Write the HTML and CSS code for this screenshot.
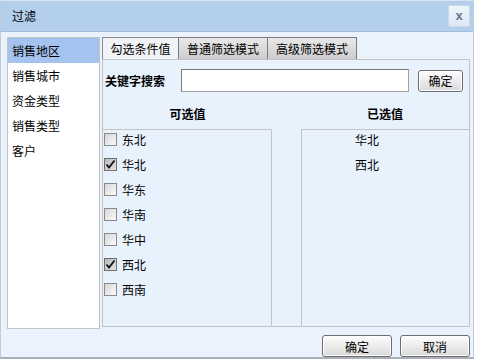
FILE: index.html
```html
<!DOCTYPE html>
<html lang="zh">
<head>
<meta charset="utf-8">
<title>过滤</title>
<link rel="stylesheet" href="styles.css">
</head>
<body>
<div class="dialog">
  <div class="titlebar">
    <span class="title">过滤</span>
    <span class="close">x</span>
  </div>
  <div class="main">
    <ul class="sidebar">
      <li class="side-item active">销售地区</li>
      <li class="side-item">销售城市</li>
      <li class="side-item">资金类型</li>
      <li class="side-item">销售类型</li>
      <li class="side-item">客户</li>
    </ul>
    <div class="tabarea">
      <div class="tabs">
        <span class="tab tab-active">勾选条件值</span>
        <span class="tab">普通筛选模式</span>
        <span class="tab">高级筛选模式</span>
      </div>
      <div class="panel">
        <div class="search">
          <span class="search-label">关键字搜索</span>
          <span class="input"></span>
          <span class="btn btn-small">确定</span>
        </div>
        <div class="columns">
          <div class="col col-left">
            <div class="col-head">可选值</div>
            <div class="box box-left">
              <div class="row"><span class="cb"></span><span>东北</span></div>
              <div class="row"><span class="cb checked"><svg viewBox="0 0 13 13" width="13" height="13"><path d="M2.5 6.5 L5 9.5 L10.5 2.5" fill="none" stroke="#111" stroke-width="1.8"/></svg></span><span>华北</span></div>
              <div class="row"><span class="cb"></span><span>华东</span></div>
              <div class="row"><span class="cb"></span><span>华南</span></div>
              <div class="row"><span class="cb"></span><span>华中</span></div>
              <div class="row"><span class="cb checked"><svg viewBox="0 0 13 13" width="13" height="13"><path d="M2.5 6.5 L5 9.5 L10.5 2.5" fill="none" stroke="#111" stroke-width="1.8"/></svg></span><span>西北</span></div>
              <div class="row"><span class="cb"></span><span>西南</span></div>
            </div>
          </div>
          <div class="col col-right">
            <div class="col-head">已选值</div>
            <div class="box box-right">
              <div class="sel">华北</div>
              <div class="sel">西北</div>
            </div>
          </div>
        </div>
      </div>
    </div>
  </div>
  <div class="footer">
    <span class="btn btn-big">确定</span>
    <span class="btn btn-big">取消</span>
  </div>
</div>
</body>
</html>
```
FILE: styles.css
```css
* { box-sizing: border-box; }
html, body { margin: 0; padding: 0; background: #ffffff; }
body {
  font-family: "Noto Sans CJK SC", "Noto Sans", sans-serif;
  font-size: 12px;
  color: #000;
}
.dialog {
  width: 474px;
  height: 359px;
  background: #eaf2fd;
  border: 1px solid #c3ccd6;
  border-top: 1px solid #d6e4f4;
  border-bottom: 2px solid #a9b0b8;
  display: flex;
  flex-direction: column;
}
.titlebar {
  height: 31px;
  flex: none;
  background: #b4cfec;
  border-bottom: 1px solid #a3bcd9;
  display: flex;
  align-items: center;
  justify-content: space-between;
  padding: 0 3px 0 11px;
}
.title { line-height: 16px; }
.close {
  width: 22px;
  height: 22px;
  background: linear-gradient(#eef4fb, #dde8f5);
  border: 1px solid #c8d8ea;
  color: #66788e;
  font-family: "Liberation Sans", sans-serif;
  font-weight: bold;
  font-size: 13px;
  display: flex;
  align-items: center;
  justify-content: center;
  line-height: 1;
  padding-bottom: 2px;
}
.main {
  display: flex;
  padding: 5px 3px 0 6px;
  gap: 2px;
}
.sidebar {
  list-style: none;
  margin: 0;
  padding: 0;
  width: 93px;
  height: 292px;
  background: #ffffff;
  border: 1px solid #c4c4c4;
}
.side-item {
  height: 25px;
  line-height: 25px;
  padding-left: 4px;
}
.side-item.active { background: #a4c3ee; }
.tabarea {
  width: 368px;
  display: flex;
  flex-direction: column;
}
.tabs {
  display: flex;
  height: 22px;
}
.tab {
  width: 90px;
  height: 22px;
  border: 1px solid #7b7b7b;
  border-bottom: none;
  margin-left: -1px;
  background: linear-gradient(#e9e9e9, #cdcdcd);
  text-align: center;
  line-height: 21px;
}
.tab.tab-active {
  width: 77px;
  margin-left: 0;
  background: #f1f3f6;
  border-color: #8c8c8c;
}
.panel {
  height: 268px;
  border: 1px solid #c4c4c4;
  background: #e8f2fd;
  display: flex;
  flex-direction: column;
}
.search {
  display: flex;
  align-items: center;
  margin-top: 9px;
  height: 23px;
  padding-left: 2px;
}
.search-label {
  font-weight: bold;
  width: 76px;
}
.input {
  width: 228px;
  height: 23px;
  background: #fff;
  border: 1px solid #7a7a7a;
  border-right-color: #a0a0a0;
  border-bottom-color: #a0a0a0;
}
.btn {
  display: inline-flex;
  align-items: center;
  justify-content: center;
  border: 1px solid #6e6e6e;
  border-radius: 3px;
  background: linear-gradient(#fefefe, #d9d9d9);
  box-shadow: inset 0 0 0 1px #ffffff;
}
.btn-small {
  width: 45px;
  height: 22px;
  margin-left: 9px;
}
.columns {
  display: flex;
  justify-content: space-between;
  flex: 1;
}
.col {
  display: flex;
  flex-direction: column;
}
.col-left { width: 169px; }
.col-right { width: 168px; }
.col-head {
  font-weight: bold;
  text-align: center;
  height: 20px;
  line-height: 20px;
  margin-top: 12px;
  margin-bottom: 5px;
}
.box {
  flex: 1;
  border-top: 1px solid #c4c4c4;
}
.box-left { border-right: 1px solid #c4c4c4; }
.box-right { border-left: 1px solid #c4c4c4; }
.row {
  height: 19px;
  margin-bottom: 6px;
  display: flex;
  align-items: center;
  padding-left: 1px;
  gap: 5px;
}
.cb {
  width: 13px;
  height: 13px;
  flex: none;
  border: 1px solid #8a8a8a;
  background: linear-gradient(135deg, #d6d6d6, #fbfbfb);
  display: flex;
  align-items: center;
  justify-content: center;
  overflow: hidden;
}
.cb svg { display: block; flex: none; }
.cb.checked { background: linear-gradient(135deg, #b9b9b9, #e4e4e4); border-color: #707070; }
.sel {
  height: 19px;
  line-height: 19px;
  margin-bottom: 6px;
  padding-left: 53px;
}
.footer {
  display: flex;
  justify-content: flex-end;
  gap: 8px;
  padding: 6px 3px 0 0;
}
.btn-big {
  width: 70px;
  height: 22px;
}
```
